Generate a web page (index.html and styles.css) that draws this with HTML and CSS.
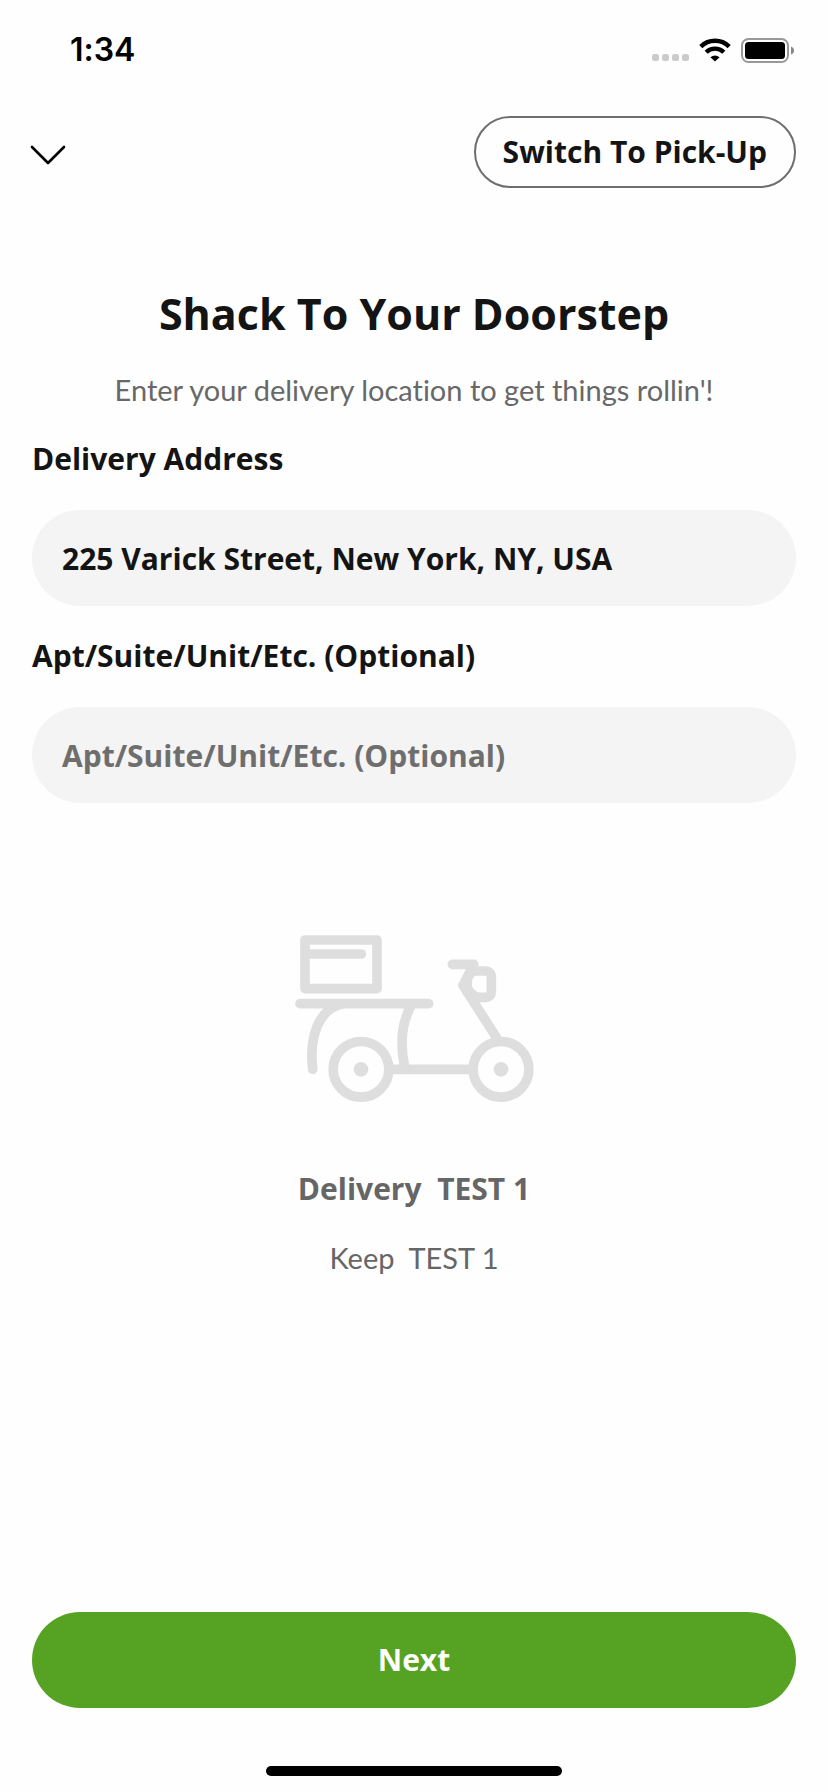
FILE: index.html
```html
<!DOCTYPE html>
<html lang="en">
<head>
<meta charset="utf-8">
<meta name="viewport" content="width=device-width, initial-scale=1">
<title>Shack To Your Doorstep</title>
<link rel="stylesheet" href="styles.css">
</head>
<body>
<div class="screen">
  <div class="status">
    <span class="status-time">1:34</span>
    <div class="status-icons">
      <svg class="dots" viewBox="0 0 37 24" width="37" height="24" aria-hidden="true" fill="#cbcbcb">
        <rect x="0" y="16" width="7" height="7" rx="2.5"/>
        <rect x="10" y="16" width="7" height="7" rx="2.5"/>
        <rect x="20" y="16" width="7" height="7" rx="2.5"/>
        <rect x="30" y="16" width="7" height="7" rx="2.5"/>
      </svg>
      <svg class="wifi" viewBox="0 0 32 24" width="32" height="24" aria-hidden="true">
        <g fill="none" stroke="#000" stroke-width="4.4">
          <path d="M1.8 8.6A20.3 20.3 0 0 1 30.2 8.6"/>
          <path d="M7.2 14.2A12.6 12.6 0 0 1 24.8 14.2"/>
        </g>
        <path d="M16 23.6L11.4 19.2Q16 15.6 20.6 19.2Z"/>
      </svg>
      <svg class="battery" viewBox="0 0 53 25" width="53" height="25" aria-hidden="true">
        <rect x="1" y="1" width="46" height="23" rx="6.5" fill="none" stroke="#999" stroke-width="2"/>
        <rect x="4" y="4" width="40" height="17" rx="3.5"/>
        <path d="M50 8.5Q53 9.5 53 12.5T50 16.5Z" fill="#888"/>
      </svg>
    </div>
  </div>

  <header class="topbar">
    <button class="collapse" type="button" aria-label="Close">
      <svg viewBox="0 0 36 20" width="36" height="20" aria-hidden="true">
        <path d="M2 2L18 18L34 2" fill="none" stroke="#000" stroke-width="2.6" stroke-linecap="round" stroke-linejoin="round"/>
      </svg>
    </button>
    <button class="switch" type="button">Switch To Pick-Up</button>
  </header>

  <main class="content">
    <h1 class="title">Shack To Your Doorstep</h1>
    <p class="subtitle">Enter your delivery location to get things rollin'!</p>

    <form class="form" id="delivery">
      <label class="label" for="address">Delivery Address</label>
      <input class="field" id="address" type="text" value="225 Varick Street, New York, NY, USA">
      <label class="label" for="unit">Apt/Suite/Unit/Etc. (Optional)</label>
      <input class="field" id="unit" type="text" placeholder="Apt/Suite/Unit/Etc. (Optional)">
    </form>

    <section class="notice">
      <svg class="scooter" viewBox="42 44 717 504" width="239" height="168" aria-hidden="true" fill="none" stroke="#dedede" stroke-width="29" stroke-linecap="round" stroke-linejoin="round">
        <path d="M72 59H288V205H72Z"/>
        <path d="M78 101H241"/>
        <path d="M57 250H443"/>
        <path d="M184 250C112 266 84 350 95 447"/>
        <path d="M392 252C360 310 356 370 371 440"/>
        <circle cx="240" cy="447" r="83.5"/>
        <circle cx="660" cy="447" r="83.5"/>
        <path d="M336 447H564" stroke-linecap="butt"/>
        <path d="M514 132H578L546 195L648 354"/>
        <path d="M580 152H612Q631 152 631 171V212Q631 231 612 231H592Q558 222 558 192Q558 160 580 152Z"/>
        <g fill="#dedede" stroke="none">
          <circle cx="240" cy="447" r="22"/>
          <circle cx="660" cy="447" r="22"/>
        </g>
      </svg>
      <h2 class="notice-title">Delivery  TEST 1</h2>
      <p class="notice-text">Keep  TEST 1</p>
    </section>
  </main>

  <footer class="footer">
    <button class="next" type="submit" form="delivery">Next</button>
    <div class="home-bar"></div>
  </footer>
</div>
</body>
</html>
```
FILE: styles.css
```css
* {
  box-sizing: border-box;
}

body {
  margin: 0;
  background: #fefefe;
  color: #141414;
  font-family: Futura, "Open Sans", "Liberation Sans", sans-serif;
  font-size: 30px;
  font-weight: 700;
  font-variant-ligatures: none;
  line-height: 40px;
}

button,
input {
  margin: 0;
  border: 0;
  font: inherit;
  color: inherit;
}

.screen {
  display: flex;
  flex-direction: column;
  min-height: 100vh;
}

.status {
  display: flex;
  justify-content: space-between;
  align-items: center;
  height: 100px;
  padding: 0 34px 0 70px;
  color: #000;
}

.status-time {
  font-family: Inter, sans-serif;
  font-size: 32px;
  font-weight: 600;
}

.status-icons {
  display: flex;
  align-items: center;
  gap: 10px;
}

.topbar {
  display: flex;
  justify-content: space-between;
  align-items: center;
  padding: 16px 32px 0 30px;
}

.collapse {
  display: flex;
  padding: 10px 0 4px;
  background: none;
}

.switch {
  height: 72px;
  padding: 0 27px;
  border: 2px solid #6e6e6e;
  border-radius: 36px;
  background: none;
}

.content {
  padding: 96px 32px 40px;
}

.title {
  margin: 0;
  font-size: 43px;
  line-height: 60px;
  text-align: center;
}

.subtitle {
  margin: 26px 0 0;
  color: #686868;
  font-family: Futura, Lato, sans-serif;
  font-size: 29px;
  font-weight: 400;
  text-align: center;
}

.form {
  display: flex;
  flex-direction: column;
  margin-top: 29px;
}

.field {
  width: 100%;
  height: 96px;
  margin: 31px 0 30px;
  padding: 0 30px;
  border-radius: 48px;
  background: #f4f4f4;
}

.field::placeholder {
  color: #6e6e6e;
  opacity: 1;
}

.notice {
  display: flex;
  flex-direction: column;
  align-items: center;
  margin-top: 102px;
  color: #666;
  white-space: pre;
}

.notice-title {
  margin: 66px 0 0;
  font-size: 30px;
}

.notice-text {
  margin: 29px 0 0;
  font-family: Futura, Lato, sans-serif;
  font-size: 29px;
  font-weight: 400;
}

.footer {
  display: flex;
  flex-direction: column;
  align-items: center;
  margin-top: auto;
  padding: 0 32px 16px;
}

.next {
  width: 100%;
  height: 96px;
  border-radius: 48px;
  background: #56a222;
  color: #fff;
}

.home-bar {
  width: 296px;
  height: 10px;
  margin-top: 58px;
  border-radius: 5px;
  background: #000;
}
```
